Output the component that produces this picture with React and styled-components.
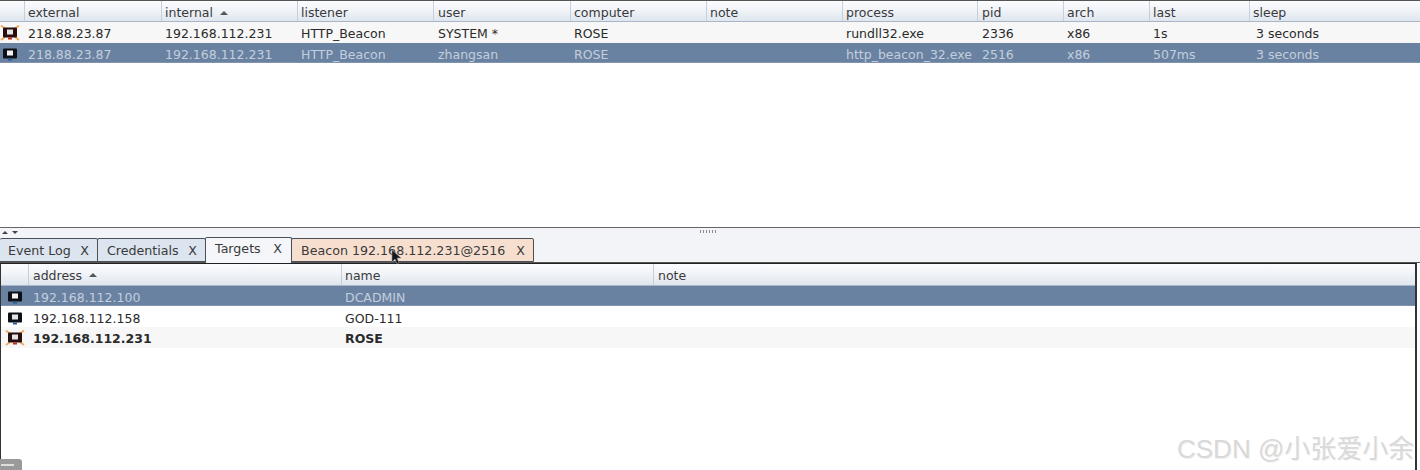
import React from "react";
import styled, { createGlobalStyle } from "styled-components";

const Global = createGlobalStyle`
  html, body { margin: 0; padding: 0; background: #fff; }
  body { font-family: "DejaVu Sans", sans-serif; font-size: 12.5px; color: #2a2a2a; overflow: hidden; }
`
const Page = styled.div`
  position: relative;
  width: 1420px;
  height: 470px;
  overflow: hidden;
  display: flex;
  flex-direction: column;
`
const TopPane = styled.section`
  flex: none;
  border-top: 1px solid #555;
  border-bottom: 1px solid #666;
  box-sizing: border-box;
  height: 228px;
`
const HeaderRow = styled.div`
  display: grid;
  grid-template-columns: ${p => p.$cols};
  height: ${p => p.$height}px;
  background: linear-gradient(#fbfcfe, #f1f4f8 45%, #dfe6ef);
  border-bottom: 1px solid #aab6c6;
  box-sizing: border-box;
`
const HeaderCell = styled.div`
  display: flex;
  align-items: center;
  gap: 5px;
  padding-left: ${p => p.$pad}px;
  padding-top: ${p => p.$top}px;
  border-right: 1px solid #c6d0dc;
  color: #3a3a3a;
  white-space: nowrap;
  overflow: hidden;
  &:last-child { border-right: 0; }
`
const SortArrow = styled.span`
  width: 0;
  height: 0;
  margin-left: 2px;
  border-left: 4px solid transparent;
  border-right: 4px solid transparent;
  border-bottom: 4px solid #555;
`
const Row = styled.div`
  display: grid;
  grid-template-columns: ${p => p.$cols};
  height: ${p => p.$height}px;
  box-sizing: border-box;
  padding-top: ${p => p.$top}px;
  align-items: center;
  background: ${p => p.$selected ? "#6a82a2" : p.$alt ? "#f7f7f7" : "#fff"};
  color: ${p => p.$selected ? "#c3cedc" : "#2a2a2a"};
  font-weight: ${p => p.$bold ? "bold" : "normal"};
  box-shadow: ${p => p.$selected ? "inset 0 -1px #8094ae" : "none"};
`
const Cell = styled.div`
  padding-left: ${p => p.$pad}px;
  white-space: nowrap;
  overflow: hidden;
`
const IconCell = styled.div`
  display: flex;
  justify-content: ${p => p.$start ? "flex-start" : "center"};
  align-items: center;
`
const Splitter = styled.div`
  position: relative;
  height: 9px;
  flex: none;
  background: #f3f4f7;
  display: flex;
  align-items: center;
  padding-left: 2px;
  gap: 4px;
`
const Nudge = styled.span`
  width: 0;
  height: 0;
  border-left: 3px solid transparent;
  border-right: 3px solid transparent;
  ${p => p.$up ? "border-bottom: 3px solid #444;" : "border-top: 3px solid #444;"}
`
const Grip = styled.div`
  position: absolute;
  left: 700px;
  top: 2px;
  width: 16px;
  height: 3px;
  background: repeating-linear-gradient(90deg, #889 0 1px, transparent 1px 3px);
`
const TabBar = styled.nav`
  display: flex;
  align-items: flex-end;
  height: 25px;
  flex: none;
  background: #f3f4f7;
  border-bottom: 1px solid #555;
`
const Tab = styled.div`
  display: flex;
  align-items: center;
  justify-content: space-between;
  box-sizing: border-box;
  width: ${p => p.$width}px;
  height: ${p => p.$active ? 26 : 24}px;
  padding: ${p => p.$active ? "0 9px 5px 9px" : `0 8px 0 ${p.$first ? 8 : 9}px`};
  margin-bottom: ${p => p.$active ? -1 : 0}px;
  background: ${p => p.$bg};
  border: 1px solid #4b5058;
  border-left-width: ${p => p.$first ? 0 : 1}px;
  border-bottom: ${p => p.$active ? 0 : "1px solid #4b5058"};
  margin-right: -1px;
  border-radius: 2px 2px 0 0;
  color: #3a3a3a;
  font-size: 12.65px;
  white-space: nowrap;
`
const Body = styled.section`
  flex: 1;
  border: 1px solid #333;
  border-top: 1px solid #222;
  border-bottom: 0;
  margin-right: 3px;
  border-right-width: 2px;
`
const Watermark = styled.div`
  position: absolute;
  left: 1177px;
  top: 428px;
  font-family: "Liberation Sans", "Noto Sans CJK SC", sans-serif;
  font-size: 26px;
  color: #d9d9d9;
  text-shadow: 1px 1px 1px #efefef;
  white-space: nowrap;
`
const CornerTab = styled.div`
  position: absolute;
  left: 0;
  bottom: 0;
  width: 22px;
  height: 11px;
  background: #9a9a9a;
  border-radius: 0 3px 0 0;
  &::after {
    content: "";
    position: absolute;
    left: 1px;
    top: 5px;
    width: 13px;
    height: 2px;
    background: #ddd;
  }
`
const Cursor = styled.svg`
  position: absolute;
  left: 391px;
  top: 249px;
`

const HostIcon = ({ marked, selected }) => (
  <svg width="20" height="16" viewBox="0 0 20 16">
    {marked && <path d="M1 0.5l4 3M19 0.5l-4 3M1 15l4-3M19 15l-4-3" stroke="#f2aa55" strokeWidth="1.8" />}
    <rect x="3" y="2.5" width="14" height="10" rx="1" fill={marked ? "#2a0d0d" : "#0c1016"} />
    <rect x="7" y="4.5" width="6" height="5" fill={selected ? "#f2f2f2" : "#e4e4e4"} />
    <rect x="8" y="12.5" width="4" height="2" fill={marked ? "#c02a20" : "#2a5a9a"} />
  </svg>
)

const topCols = "25px 137px 136px 136px 137px 136px 136px 135px 86px 86px 100px 1fr"
const topHeaders = ["", "external", "internal", "listener", "user", "computer", "note", "process", "pid", "arch", "last", "sleep"]
const topPads = [3, 3, 3, 4, 3, 3, 3, 4, 3, 3, 6]
const topRows = [
  { marked: true, alt: true, top: 1, cells: ["218.88.23.87", "192.168.112.231", "HTTP_Beacon", "SYSTEM *", "ROSE", "", "rundll32.exe", "2336", "x86", "1s", "3 seconds"] },
  { selected: true, top: 2, cells: ["218.88.23.87", "192.168.112.231", "HTTP_Beacon", "zhangsan", "ROSE", "", "http_beacon_32.exe", "2516", "x86", "507ms", "3 seconds"] },
]
const targetCols = "28px 313px 312px 1fr"
const targetHeaders = ["", "address", "name", "note"]
const targetRows = [
  { selected: true, height: 20, top: 2, cells: ["192.168.112.100", "DCADMIN", ""] },
  { height: 21, top: 3, cells: ["192.168.112.158", "GOD-111", ""] },
  { marked: true, bold: true, alt: true, height: 21, top: 1, cells: ["192.168.112.231", "ROSE", ""] },
]
const tabs = [
  { name: "Event Log", width: 98, bg: "#dbe4ef", first: true },
  { name: "Credentials", width: 109, bg: "#dbe4ef" },
  { name: "Targets", width: 87, bg: "#f4f6f9", active: true },
  { name: "Beacon 192.168.112.231@2516", width: 243, bg: "#f7dfcf" },
]

export default function App() {
  return (
    <Page>
      <Global />
      <TopPane>
        <HeaderRow $cols={topCols} $height={21}>
          {topHeaders.map((h, i) => (
            <HeaderCell key={i} $top={3} $pad={i === 4 || i === 8 ? 4 : 3}>
              {h}
              {h === "internal" && <SortArrow />}
            </HeaderCell>
          ))}
        </HeaderRow>
        {topRows.map((r, i) => (
          <Row key={i} $cols={topCols} $height={i ? 20 : 21} $top={r.top} $selected={r.selected} $alt={r.alt}>
            <IconCell $start><HostIcon marked={r.marked} selected={r.selected} /></IconCell>
            {r.cells.map((c, j) => <Cell key={j} $pad={topPads[j]}>{c}</Cell>)}
          </Row>
        ))}
      </TopPane>
      <Splitter>
        <Nudge $up /><Nudge />
        <Grip />
      </Splitter>
      <TabBar>
        {tabs.map(t => (
          <Tab key={t.name} $width={t.width} $bg={t.bg} $first={t.first} $active={t.active}>
            <span>{t.name}</span>
            <span>X</span>
          </Tab>
        ))}
      </TabBar>
      <Body>
        <HeaderRow $cols={targetCols} $height={22}>
          {targetHeaders.map((h, i) => (
            <HeaderCell key={i} $top={1} $pad={i === 2 ? 3 : 4}>
              {h}
              {h === "address" && <SortArrow />}
            </HeaderCell>
          ))}
        </HeaderRow>
        {targetRows.map((r, i) => (
          <Row key={i} $cols={targetCols} $height={r.height} $top={r.top} $selected={r.selected} $alt={r.alt} $bold={r.bold}>
            <IconCell><HostIcon marked={r.marked} selected={r.selected} /></IconCell>
            {r.cells.map((c, j) => <Cell key={j} $pad={j === 1 ? 3 : 4}>{c}</Cell>)}
          </Row>
        ))}
      </Body>
      <Watermark>CSDN @小张爱小余</Watermark>
      <CornerTab />
      <Cursor width="12" height="18" viewBox="0 0 12 18">
        <path d="M1 1v12l3-3 2 5 2-1-2-5h4z" fill="#15181c" stroke="#8a8f96" strokeWidth="0.6" />
      </Cursor>
    </Page>
  );
}
